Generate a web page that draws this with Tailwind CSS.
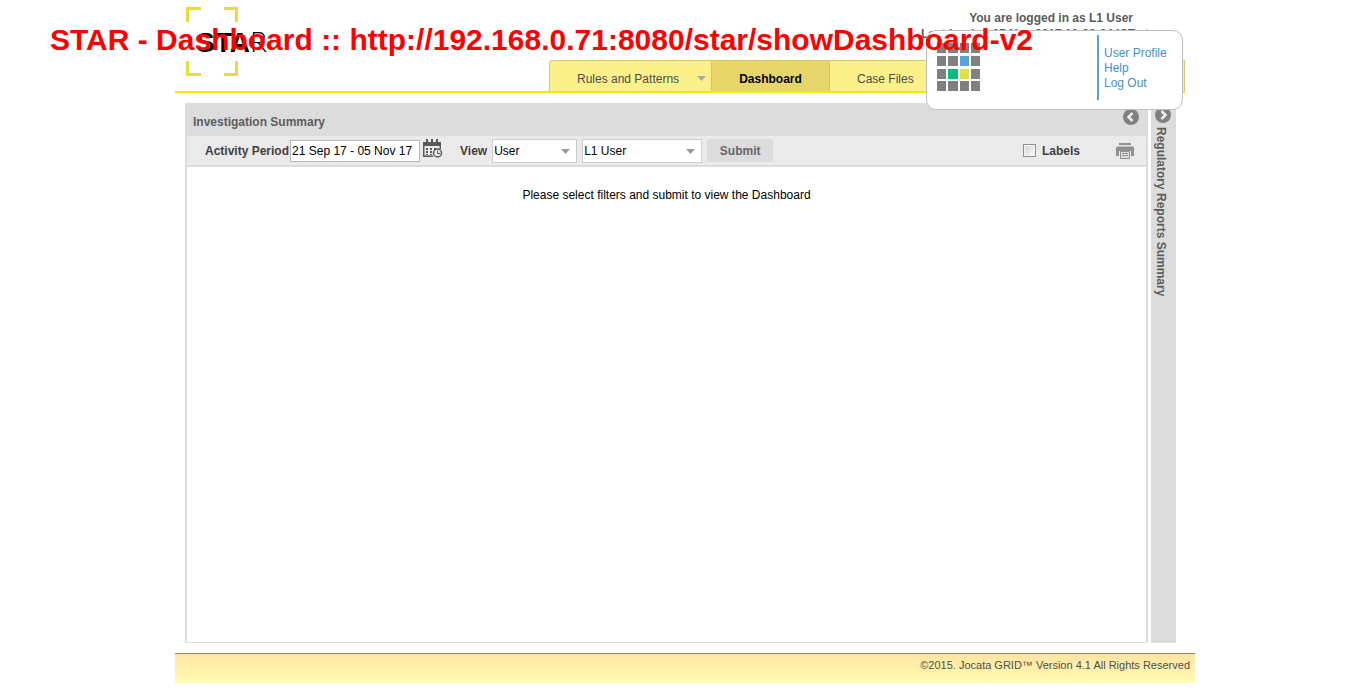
<!DOCTYPE html>
<html lang="en">
<head>
<meta charset="utf-8">
<title>STAR - Dashboard</title>
<script src="https://cdn.jsdelivr.net/npm/@tailwindcss/browser@4"></script>
</head>
<body class="bg-white font-['Liberation_Sans',Arial,sans-serif] text-xs text-[#4d4d4d]">
<p class="absolute left-[50px] top-[22px] z-30 whitespace-nowrap text-[30px] leading-9 font-bold text-[#ff0000]">STAR - Dashboard :: http://192.168.0.71:8080/star/showDashboard-v2</p>

<div class="pl-[21px]">
<div class="relative mx-auto flex min-h-screen max-w-[1020px] flex-col">
  <header class="mr-[10px] flex h-[93px] justify-between border-b-2 border-[#f4ea00]">
    <a href="#" aria-label="STAR" class="relative ml-[11px] mt-[7px] block h-[70px] w-[90px]">
      <svg class="h-[70px] w-[53px]" viewBox="0 0 53 70" fill="none" stroke="#e8dc3c" stroke-width="3"><path d="M1.500 15V1.500H15M38 1.500h12.500V15M1.500 54v13.500H15M38 67.500h12.500V54"/></svg>
      <span class="absolute left-[10px] top-[18px] text-[28px] leading-8 text-black"><b>STA</b><span class="font-['Lato'] font-light">R</span></span>
    </a>
    <div class="flex w-[636px] flex-col justify-between">
      <div class="mr-[52px] pt-[10px] text-right font-bold leading-4 text-[#5a5a5a]">
        <p>You are logged in as L1 User</p>
        <p class="-mr-4">Last Login : 05 Nov 2017 10:28:24 IST at</p>
      </div>
      <nav class="flex h-[31px] rounded-tl border-x border-t border-[#d6ca62] bg-[#fcf08b] leading-9">
        <a href="#" class="flex w-[161px] items-center justify-between pl-[27px] pr-[5px] pt-[5px]">Rules and Patterns<svg class="h-[5px] w-[9px]" viewBox="0 0 9 5" fill="#aaa"><path d="M0 0h9L4.500 5z"/></svg></a>
        <a href="#" class="w-[119px] border-x border-[#d0c468] bg-[#e6d66a] text-center font-bold text-black">Dashboard</a>
        <a href="#" class="pl-[27px]">Case Files</a>
      </nav>
    </div>
  </header>

  <aside class="absolute left-[751px] top-[30px] z-20 flex h-20 w-[257px] justify-between rounded-[10px] border border-[#bfbfbf] bg-white">
    <svg class="ml-[10px] mt-3 h-[48px] w-[43px]" viewBox="0 0 43 48" fill="#808080">
      <path d="M0 0h9v10H0zM11 0h10v10H11zM23 0h9v10h-9zM34 0h9v10h-9zM0 13h9v10H0zM11 13h10v10H11zM34 13h9v10h-9zM0 26h9v10H0zM34 26h9v10h-9zM0 38h9v10H0zM11 38h10v10H11zM23 38h9v10h-9zM34 38h9v10h-9z"/>
      <path fill="#5aa0da" d="M23 13h9v10h-9z"/><path fill="#00bd7e" d="M11 26h10v10H11z"/><path fill="#dfe14a" d="M23 26h9v10h-9z"/>
    </svg>
    <nav class="mr-3 mt-1 flex h-[65px] w-[73px] flex-col border-l-2 border-[#5a9fd4] pl-[5px] pt-[11px] leading-[15px] text-[#4490ca]">
      <a href="#">User Profile</a><a href="#">Help</a><a href="#">Log Out</a>
    </nav>
  </aside>

  <main class="ml-[10px] mr-[19px] mt-[10px] flex h-[540px] gap-[3px]">
    <section class="flex flex-1 flex-col border-x-2 border-b border-[#dcdcdc]">
      <div class="flex h-[33px] justify-between bg-[#dcdcdc] pl-[6px] pr-[7px]">
        <h1 class="pt-[11px] font-bold leading-4 text-[#5c5c5c]">Investigation Summary</h1>
        <button aria-label="Collapse" class="mt-[6px] size-4"><svg viewBox="0 0 16 16"><circle cx="8" cy="8" r="8" fill="#808080"/><path d="M9.500 4 5.500 8l4 4" fill="none" stroke="#eee" stroke-width="2.500"/></svg></button>
      </div>
      <form class="flex h-[31px] items-center border-b-2 border-[#dcdcdc] bg-[#eaeaea] font-bold text-[#3f3f3f]">
        <label for="period" class="ml-[18px]">Activity Period</label>
        <input id="period" value="21 Sep 17 - 05 Nov 17" class="ml-px h-[22px] w-[130px] border border-[#b5b5b5] bg-white px-px font-normal text-black">
        <button type="button" aria-label="Pick dates" class="mb-1 ml-[3px] h-5 w-5"><svg viewBox="0 0 20 20" fill="none"><path fill="#595959" d="M0 3h18v4H0zM3 0h2v5H3zM8 0h2v5H8zM13 0h2v5h-2zM3 9h2v2H3zm4 0h2v2H7zm4 0h2v2h-2zM3 12h2v2H3zm4 0h2v2H7zM3 15h2v1H3zm4 0h2v1H7z"/><path d="M.75 6v11.250H10M17.250 6v4" stroke="#595959" stroke-width="1.500"/><circle cx="14.500" cy="14" r="4" stroke="#595959" stroke-width="1.500"/><path d="M14.500 11.500v3h2.500" stroke="#595959"/></svg></button>
        <label for="view" class="ml-[17px]">View</label>
        <div class="relative ml-[5px]"><select id="view" class="block h-6 w-[85px] appearance-none border border-[#ccc] bg-white px-px font-normal text-black"><option>User</option></select><svg class="pointer-events-none absolute right-[7px] top-[10px] h-[5px] w-[9px]" viewBox="0 0 9 5" fill="#999"><path d="M0 0h9L4.500 5z"/></svg></div>
        <div class="relative ml-[5px]"><select aria-label="User name" class="block h-6 w-[120px] appearance-none border border-[#ccc] bg-white px-px font-normal text-black"><option>L1 User</option></select><svg class="pointer-events-none absolute right-[7px] top-[10px] h-[5px] w-[9px]" viewBox="0 0 9 5" fill="#999"><path d="M0 0h9L4.500 5z"/></svg></div>
        <button type="button" class="ml-[5px] h-[23px] w-[66px] rounded-[3px] bg-[#dcdcdc] text-[#666]">Submit</button>
        <input id="labels" type="checkbox" class="ml-auto size-[13px] appearance-none border border-[#8e8f8f] bg-gradient-to-br from-[#ccd0d5] to-white shadow-[inset_0_0_0_1px_#f4f4f4]">
        <label for="labels" class="ml-[6px]">Labels</label>
        <button type="button" aria-label="Print" class="ml-9 mr-3 mt-px h-[17px] w-[18px]"><svg viewBox="0 0 18 17"><path fill="#909090" d="M3 0h12v2H3zM1 3.500h16l1 1V13h-3V8H3v5H0V4.500z"/><path d="M4.500 8.500h9v7h-9zM6 10.500h6M6 12.500h6" fill="#dedede" stroke="#909090"/></svg></button>
      </form>
      <p class="pt-5 text-center leading-4 text-black">Please select filters and submit to view the Dashboard</p>
    </section>
    <aside class="flex w-[25px] flex-col items-center bg-[#dcdcdc]">
      <button aria-label="Expand" class="mr-px mt-1 size-4"><svg viewBox="0 0 16 16"><circle cx="8" cy="8" r="8" fill="#808080"/><path d="m6.500 4 4 4-4 4" fill="none" stroke="#eee" stroke-width="2.500"/></svg></button>
      <h2 class="mr-[5px] mt-1 font-bold text-[#5c5c5c] [writing-mode:vertical-rl]">Regulatory Reports Summary</h2>
    </aside>
  </main>

  <footer class="mt-[10px] h-[30px] border-t border-[#8f8a6a] bg-gradient-to-b from-[#ffe4a2] to-[#fffdb3] pr-[5px] pt-[3px] text-right text-[11px] leading-4">©2015. Jocata GRID™ Version 4.1 All Rights Reserved</footer>
</div>
</div>
</body>
</html>
